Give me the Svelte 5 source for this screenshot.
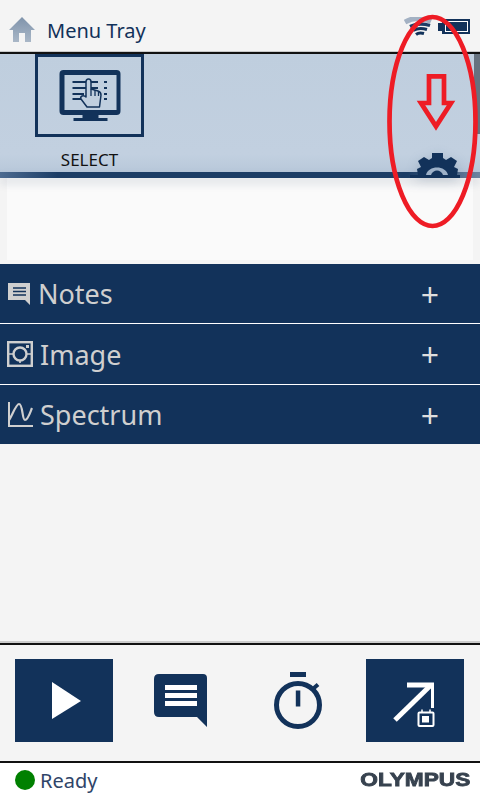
<script>
  const rows = [
    { label: 'Notes', icon: 'notes' },
    { label: 'Image', icon: 'image' },
    { label: 'Spectrum', icon: 'spectrum' }
  ];
</script>

<div class="screen">
  <header class="top">
    <svg class="home" width="26" height="26" viewBox="0 0 26 26">
      <defs>
        <linearGradient id="hg" x1="0" y1="0" x2="0" y2="1">
          <stop offset="0" stop-color="#7f93ab" />
          <stop offset="1" stop-color="#a9b7c7" />
        </linearGradient>
      </defs>
      <path d="M13 0 L26 13 L22 13 L22 25 L16 25 L16 16 L10 16 L10 25 L4 25 L4 13 L0 13 Z" fill="url(#hg)" />
    </svg>
    <span class="title">Menu Tray</span>
    <div class="status-icons">
      <svg width="28" height="20" viewBox="0 0 28 20" fill="none">
        <path d="M1 5 Q13 -2 27 4.500" stroke="#a3b1c3" stroke-width="5" />
        <path d="M6 9.500 Q15 5 26 8.500" stroke="#1c3d66" stroke-width="3.400" />
        <path d="M9 13.500 Q15 10 23 12.500" stroke="#12325a" stroke-width="3" />
        <path d="M12 17.500 Q15 15 20 16.500" stroke="#12325a" stroke-width="3" />
      </svg>
      <div class="battery">
        <span class="nub"></span>
        <span class="cell"><span class="fill"></span></span>
      </div>
    </div>
  </header>

  <section class="tray">
    <div class="tool">
      <div class="tool-box">
        <svg width="64" height="54" viewBox="0 0 64 54">
          <rect x="1.500" y="1" width="61" height="45" rx="4" fill="#12325a" />
          <rect x="6.500" y="6" width="52" height="35" fill="#c0cfdf" />
          <rect x="24.500" y="46" width="16" height="4" fill="#12325a" />
          <rect x="15.500" y="49" width="34" height="3" fill="#12325a" />
          <g stroke="#12325a" stroke-width="2" fill="none">
            <path d="M14.500 13 H40 M14.500 19 H40 M14.500 25 H26 M14.500 30 H26" />
            <path d="M46 13 h3 M46 19 h3 M46 25 h3 M46 30 h3" />
          </g>
          <path d="M28 24 V13 q0 -3 2.500 -3 q2.500 0 2.500 3 V20 l7 2 q3 1 3 4 l-1.500 12 H29 l-6 -8 q-1 -2 1 -3 q2 -1 4 1 Z" fill="#c0cfdf" stroke="#12325a" stroke-width="1.500" stroke-linejoin="round" />
          <path d="M33 20 V27 M37 21 V27 M40.500 22 V27" stroke="#12325a" stroke-width="1.300" fill="none" />
        </svg>
      </div>
      <span class="tool-label">SELECT</span>
    </div>
    <div class="scroll-thumb"></div>
    <svg class="gear" width="50" height="25" viewBox="0 0 50 25">
      <path d="M0 25 V22 H8 L7 16 L11 14 L8 8 L14 4 L19 7 L22 5 L22 0 H33 L33 5 L36 7 L41 4 L47 8 L44 14 L48 16 L47 22 H50 V25 Z" fill="#12325a" />
      <path d="M16 22 C18 12 36 12 38 22 L33 22 C31 16 23 16 21 22 Z" fill="#9db1c8" />
    </svg>
  </section>
  <div class="tray-rule"></div>

  <div class="tray-body"></div>

  <section class="rows">
    {#each rows as row}
      <div class="row">
        <span class="row-icon">
          {#if row.icon === 'notes'}
            <svg class="ico-notes" width="22" height="22" viewBox="0 0 22 22">
              <path d="M0 0 H22 V22 L17 17 H0 Z" fill="#cfcfcf" />
              <path d="M5 5 H18 M5 8.500 H18 M5 12 H18" stroke="#12325a" stroke-width="1.600" fill="none" />
            </svg>
          {:else if row.icon === 'image'}
            <svg class="ico-image" width="26" height="26" viewBox="0 0 26 26" fill="none" stroke="#cfcfcf">
              <rect x="1.200" y="1.200" width="23.600" height="23.600" stroke-width="2.400" />
              <circle cx="13" cy="13" r="6.500" stroke-width="2.400" />
              <path d="M1 13 H6.500 M19.500 13 H25 M13 19.500 V22" stroke-width="1.600" />
              <rect x="19" y="4" width="3" height="3" fill="#cfcfcf" stroke="none" />
            </svg>
          {:else}
            <svg class="ico-spectrum" width="25" height="25" viewBox="0 0 25 25" fill="none" stroke="#cfcfcf">
              <path d="M1 0 V24 H25" stroke-width="2" />
              <path d="M1 18 C4 14 8 2 11 2 C15 2 14 18 17 18 C20 18 22 11 24 6" stroke-width="2.200" />
            </svg>
          {/if}
        </span>
        <span class="row-label" class:notes={row.icon === 'notes'}>{row.label}</span>
        <span class="plus">+</span>
      </div>
    {/each}
  </section>

  <div class="spacer"></div>

  <footer class="actions">
    <button class="act solid" aria-label="Play">
      <svg class="play" width="30" height="38" viewBox="0 0 30 38"><path d="M0 0 L29 19 L0 37 Z" fill="#fff" /></svg>
    </button>
    <button class="act" aria-label="Notes">
      <svg width="54" height="54" viewBox="1 0 54 54">
        <path d="M6 0 H50 Q54 0 54 4 V53 L44 43 H6 Q1 43 1 38 V5 Q1 0 6 0 Z" fill="#12325a" />
        <path d="M12 13.500 H44 M12 21.500 H44 M12 29.500 H44" stroke="#fff" stroke-width="5" />
      </svg>
    </button>
    <button class="act" aria-label="Timer">
      <svg width="50" height="58" viewBox="0 0 50 58" fill="none" stroke="#12325a">
        <rect x="17" y="0" width="16" height="5" fill="#12325a" stroke="none" />
        <circle cx="25" cy="33" r="21.500" stroke-width="5" />
        <rect x="22.800" y="18.500" width="4.500" height="16" fill="#12325a" stroke="none" />
        <path d="M41 16 L45 12.500" stroke-width="4" />
      </svg>
    </button>
    <button class="act solid" aria-label="Export">
      <svg width="44" height="52" viewBox="0 0 44 52">
        <path d="M2 45 L38 10" stroke="#fff" stroke-width="5" />
        <path d="M14 7.500 H41 V33 H38 V12.500 H14 Z" fill="#fff" />
        <rect x="25.500" y="37.500" width="15" height="13.500" rx="1" fill="#12325a" stroke="#fff" stroke-width="2" />
        <rect x="29" y="41" width="7" height="6.500" fill="#fff" />
        <path d="M29 34.500 V38 M37 34.500 V38" stroke="#fff" stroke-width="1.500" />
      </svg>
    </button>
  </footer>

  <div class="statusbar">
    <span class="dot"></span>
    <span class="ready">Ready</span>
    <span class="brand">OLYMPUS</span>
  </div>

  <svg class="annotation" width="100" height="220" viewBox="0 0 100 220" fill="none" stroke="#ee1c25">
    <ellipse cx="47.500" cy="110.500" rx="43" ry="104.500" stroke-width="4.700" />
    <path d="M44 65.300 H59 V92 H66 L51 115.300 L36 92 H44 Z" stroke-width="4.700" />
  </svg>
</div>

<style>
  :global(body) {
    margin: 0;
    background: #f4f4f4;
  }
  .screen {
    position: relative;
    width: 480px;
    height: 800px;
    overflow: hidden;
    display: flex;
    flex-direction: column;
    background: #f4f4f4;
    font-family: "Noto Sans", "Open Sans", sans-serif;
  }
  .top {
    height: 52px;
    flex: none;
    box-sizing: border-box;
    display: flex;
    align-items: center;
    padding: 10px 10px 0 9px;
    border-bottom: 1px solid #c9c9c9;
  }
  .home {
    flex: none;
    margin-top: -2px;
  }
  .title {
    margin-left: 12px;
    font-size: 20px;
    line-height: 24px;
    color: #12325a;
  }
  .status-icons {
    margin-left: auto;
    display: flex;
    align-items: center;
    gap: 6px;
    margin-top: -8px;
  }
  .battery {
    display: flex;
    align-items: center;
  }
  .nub {
    width: 4px;
    height: 8px;
    background: #12325a;
  }
  .cell {
    box-sizing: border-box;
    width: 28px;
    height: 15px;
    background: #12325a;
    padding: 2px;
    display: flex;
  }
  .fill {
    flex: 1;
    margin-left: 1px;
    background: #12325a;
    border: 1px solid #fff;
  }
  .tray {
    position: relative;
    height: 120px;
    flex: none;
    box-sizing: border-box;
    border-top: 2px solid #111;
    background: linear-gradient(#bfcede, #c2d0e0 85%, #b8c8da);
  }
  .tool {
    margin-left: 35px;
    width: 109px;
    display: flex;
    flex-direction: column;
    align-items: center;
  }
  .tool-box {
    box-sizing: border-box;
    width: 109px;
    height: 83px;
    border: 3px solid #12325a;
    display: flex;
    align-items: flex-start;
    justify-content: center;
    padding-top: 12px;
  }
  .tool-label {
    margin-top: 13px;
    font-size: 17px;
    line-height: 20px;
    color: #111;
  }
  .scroll-thumb {
    position: absolute;
    right: 0;
    top: 0;
    width: 6px;
    height: 80px;
    background: #66727f;
  }
  .gear {
    position: absolute;
    left: 410px;
    top: 99px;
    z-index: 2;
    filter: drop-shadow(0 3px 6px rgba(18, 50, 90, 0.18));
  }
  .tray-rule {
    flex: none;
    height: 6px;
    background: linear-gradient(90deg, #4c6a90, #1c3d66 12%, #1c3d66 85%, #6d84a0);
    box-shadow: 0 5px 10px rgba(18, 50, 90, 0.15);
    position: relative;
    z-index: 1;
  }
  .tray-body {
    flex: none;
    height: 82px;
    margin: 0 7px 4px;
    background: #fafafa;
  }
  .rows {
    flex: none;
    display: flex;
    flex-direction: column;
    gap: 1px;
    background: #fff;
  }
  .row {
    height: 59px;
    display: flex;
    align-items: center;
    background: #12325a;
    color: #cfcfcf;
  }
  .row:nth-child(2) {
    height: 60px;
  }
  .row-icon {
    width: 40px;
    flex: none;
    display: flex;
  }
  .ico-notes,
  .ico-spectrum {
    margin-left: 8px;
  }
  .ico-image {
    margin-left: 7px;
  }
  .row-label {
    font-size: 27px;
    line-height: 34px;
    margin-top: 1px;
  }
  .row-label.notes {
    margin-left: -2px;
  }
  .plus {
    margin-left: auto;
    margin-right: 41px;
    margin-top: 2px;
    font-size: 32px;
    line-height: 34px;
    color: #dedede;
  }
  .spacer {
    flex: 1;
  }
  .actions {
    flex: none;
    height: 120px;
    box-sizing: border-box;
    border-top: 2px solid #111;
    border-bottom: 2px solid #111;
    box-shadow: 0 -2px 0 #ccc;
    padding: 14px 16px 0 15px;
    display: flex;
    justify-content: space-between;
    align-items: flex-start;
  }
  .act {
    width: 98px;
    height: 83px;
    padding: 0;
    border: 0;
    background: none;
    display: flex;
    align-items: center;
    justify-content: center;
  }
  .act.solid {
    background: #12325a;
  }
  .play {
    margin-left: 6px;
  }
  .statusbar {
    flex: none;
    height: 37px;
    box-sizing: border-box;
    background: #fff;
    display: flex;
    align-items: center;
    padding: 0 10px 3px 15px;
  }
  .dot {
    width: 20px;
    height: 20px;
    border-radius: 50%;
    background: #008000;
  }
  .ready {
    margin-left: 5px;
    margin-top: 2px;
    font-size: 20px;
    line-height: 24px;
    color: #2f4468;
  }
  .brand {
    margin-left: auto;
    font-family: "Liberation Sans", sans-serif;
    font-weight: 700;
    font-size: 18px;
    color: #37424f;
    transform: scaleX(1.26);
    transform-origin: right center;
    -webkit-text-stroke: 0.8px #37424f;
  }
  .annotation {
    position: absolute;
    left: 385px;
    top: 11px;
    overflow: visible;
    z-index: 3;
  }
</style>
